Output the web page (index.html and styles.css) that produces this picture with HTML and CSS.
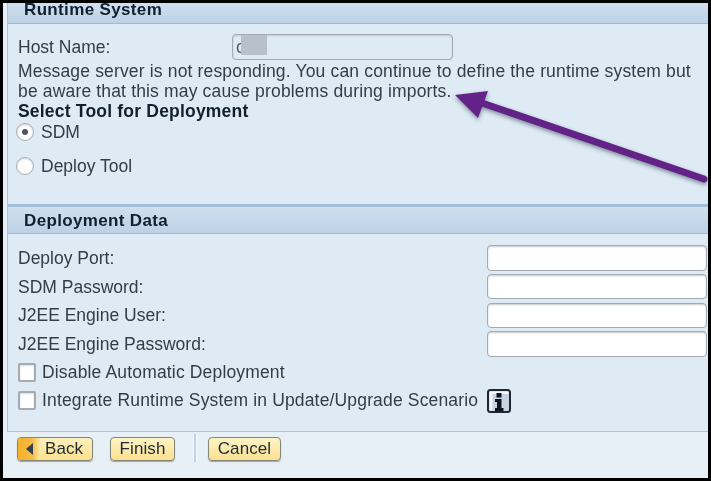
FILE: index.html
```html
<!DOCTYPE html>
<html lang="en">
<head>
<meta charset="utf-8">
<title>Runtime System</title>
<link rel="stylesheet" href="styles.css">
</head>
<body>
<div class="frame">
  <div class="panel">
    <section class="runtime">
      <h2 class="section-head first">Runtime System</h2>
      <div class="runtime-body">
        <div class="host-row">
          <label class="host-label">Host Name:</label>
          <div class="field host-field"><span class="host-value">c</span><span class="redact"></span></div>
        </div>
        <p class="message">Message server is not responding. You can continue to define the runtime system but be aware that this may cause problems during imports.</p>
        <h3 class="sub-head">Select Tool for Deployment</h3>
        <div class="radio-row sdm"><span class="radio checked"></span><span>SDM</span></div>
        <div class="radio-row tool"><span class="radio"></span><span>Deploy Tool</span></div>
      </div>
    </section>
    <section class="deployment">
      <h2 class="section-head">Deployment Data</h2>
      <div class="deployment-body">
        <div class="form-grid">
          <label>Deploy Port:</label><div class="field"></div>
          <label>SDM Password:</label><div class="field"></div>
          <label>J2EE Engine User:</label><div class="field"></div>
          <label>J2EE Engine Password:</label><div class="field"></div>
        </div>
        <div class="check-row first-check"><span class="check"></span><span>Disable Automatic Deployment</span></div>
        <div class="check-row"><span class="check"></span><span class="check-text">Integrate Runtime System in Update/Upgrade Scenario</span>
          <span class="info">
            <svg viewBox="0 0 24 24" width="24" height="24" aria-hidden="true">
              <rect x="1" y="1" width="22" height="22" rx="2.5" fill="#c9d3e4" stroke="#1c2733" stroke-width="2"/>
              <path d="M2.500 2.500h19v2.500H5.500v16.500h-3z" fill="#f4f7fb"/>
              <rect x="9.500" y="4" width="5" height="4.500" fill="#10161e"/>
              <path d="M8 10h6.500v9h2v3H8v-3h2v-6H8z" fill="#10161e"/>
            </svg>
          </span>
        </div>
      </div>
    </section>
  </div>
  <div class="footer">
    <button class="btn back"><span class="back-tab"><span class="tri"></span></span><span class="back-label">Back</span></button>
    <button class="btn finish">Finish</button>
    <span class="sep"></span>
    <button class="btn cancel">Cancel</button>
  </div>
  <svg class="arrow" viewBox="0 0 711 481" width="711" height="481" aria-hidden="true">
    <defs>
      <filter id="sh" x="-10%" y="-20%" width="120%" height="150%"><feDropShadow dx="0" dy="2" stdDeviation="2" flood-color="#2a3a4a" flood-opacity=".55"/></filter>
    </defs>
    <g filter="url(#sh)" fill="#642387" stroke="#642387">
      <path d="M482 103L704 179" stroke-width="7" stroke-linecap="round" fill="none"/>
      <path d="M455 95L488 91L478 118Z" stroke-width="0"/>
    </g>
  </svg>
</div>
</body>
</html>
```
FILE: styles.css
```css
* { box-sizing: border-box; }
html, body { margin: 0; padding: 0; background: #000; }
body { width: 711px; height: 481px; overflow: hidden; }
.frame {
  position: relative;
  width: 711px; height: 481px;
  border: solid #000;
  border-width: 3px;
  background: #e8f0f7;
  padding-left: 4px;
  font-family: "Liberation Sans", Arial, sans-serif;
  font-size: 17.500px;
  letter-spacing: .16px;
  color: #333d48;
  overflow: hidden;
  filter: blur(.45px);
}
.panel {
  height: 429px;
  background: #deeaf4;
  border-left: 1px solid #a9c4de;
  border-bottom: 1px solid #a9c4de;
  display: flex; flex-direction: column;
}
.runtime { height: 201px; }
.section-head {
  margin: 0;
  height: 30px;
  padding: 5px 0 0 16px;
  font-size: 17px;
  line-height: 18px;
  font-weight: bold;
  letter-spacing: .35px;
  color: #10202f;
  background: linear-gradient(#cfdfee, #bcd2e7);
  border-top: 3px solid #a3bfd8;
  border-bottom: 1px solid #9ebad4;
}
.section-head.first { height: 21px; border-top: 0; padding-top: 0; margin-top: 0; line-height: 14px; }
.runtime-body { padding: 10px 16px 0 10px; }
.host-row { display: flex; align-items: center; height: 26px; }
.host-label { width: 214px; letter-spacing: 0; }
.field {
  background: #fff;
  border: 1px solid #a3aab1;
  box-shadow: inset 0 1px 2px #c5cad0;
  border-radius: 4px;
  height: 26px;
}
.host-field {
  width: 221px;
  background: #deeaf4;
  display: flex; align-items: center;
  padding-left: 3px;
  position: relative;
  color: #556;
}
.host-value { display: block; }
.redact { position: absolute; left: 8px; top: 0; width: 26px; height: 20px; background: #b9c0ca; }
.message { margin: 0; line-height: 20px; width: 682px; padding-top: 1px; }
.sub-head { margin: 0; font-size: 17.500px; line-height: 20px; font-weight: bold; color: #10202f; letter-spacing: .2px; }
.radio-row { display: flex; align-items: center; gap: 7px; height: 20px; margin-left: -2px; letter-spacing: 0; }
.sdm { margin-top: 1px; }
.tool { margin-top: 14px; }
.radio {
  width: 18px; height: 18px; border-radius: 50%;
  background: #fff; border: 1.500px solid #a9adb2;
  box-shadow: inset 0 1px 2px #d0d3d7;
  display: flex; align-items: center; justify-content: center;
}
.radio.checked::after { content: ""; width: 6px; height: 6px; border-radius: 50%; background: #4c5662; }
.deployment { flex: 1; }
.deployment-body { padding: 11px 0 0 10px; }
.form-grid {
  display: grid;
  grid-template-columns: 469px 220px;
  grid-auto-rows: 25.500px;
  row-gap: 3.300px;
  align-items: center;
}
.form-grid label { padding-top: 1px; letter-spacing: 0; }
.form-grid .field { height: 25.500px; }
.check-row { display: flex; align-items: center; gap: 6px; height: 20px; }
.check-row.first-check { margin-top: 6px; margin-bottom: 8px; }
.check {
  width: 18px; height: 19px; background: #fff;
  border: 2px solid #a5abb1; border-radius: 2px;
  box-shadow: inset 0 1px 2px #d8dbde;
}
.check-text { width: 439px; white-space: nowrap; }
.info { display: block; width: 24px; height: 24px; }
.footer {
  display: flex; align-items: flex-start;
  height: 46px;
  padding: 5px 0 0 10px;
}
.btn {
  font: 17px "Liberation Sans", Arial, sans-serif;
  letter-spacing: .1px;
  color: #1f2a35;
  height: 24px;
  padding: 0;
  border: 1px solid #85867a;
  border-radius: 4px;
  background: linear-gradient(#fdf4c6, #fbe08f);
  box-shadow: 0 1px 1px #a9a48a;
  display: flex; align-items: center; justify-content: center;
}
.back {
  width: 76px; overflow: hidden; justify-content: flex-start;
  background: linear-gradient(#fcf0bd, #fbe08f);
}
.back-tab {
  width: 22px; height: 100%;
  background: linear-gradient(90deg, #f5b02c 0, #f7bb44 14px, #fde39a 21px);
  display: flex; align-items: center; justify-content: center;
}
.tri { width: 0; height: 0; border-style: solid; border-color: transparent #34414f transparent transparent; border-width: 6px 7px 6px 0; }
.back-label { margin-left: 5px; }
.finish { width: 65px; margin-left: 17px; }
.sep { width: 4px; height: 28px; margin: -3px 11px 0 18px; background: #bdd3ec; border: 1px solid #f6f9fc; border-width: 0 1px; }
.cancel { width: 73px; }
.arrow { position: absolute; left: -3px; top: -3px; pointer-events: none; }
```
